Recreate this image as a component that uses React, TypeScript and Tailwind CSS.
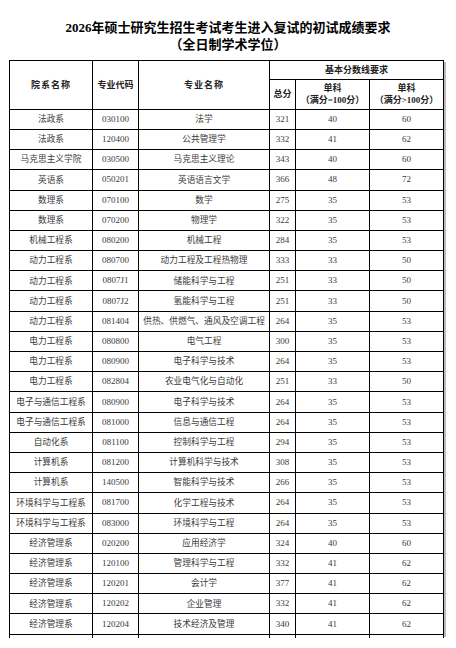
import React from 'react';

interface Row {
  dept: string;
  code: string;
  major: string;
  total: number;
  s100: number;
  sOver: number;
}

const rows: Row[] = [
  { dept: '法政系', code: '030100', major: '法学', total: 321, s100: 40, sOver: 60 },
  { dept: '法政系', code: '120400', major: '公共管理学', total: 332, s100: 41, sOver: 62 },
  { dept: '马克思主义学院', code: '030500', major: '马克思主义理论', total: 343, s100: 40, sOver: 60 },
  { dept: '英语系', code: '050201', major: '英语语言文学', total: 366, s100: 48, sOver: 72 },
  { dept: '数理系', code: '070100', major: '数学', total: 275, s100: 35, sOver: 53 },
  { dept: '数理系', code: '070200', major: '物理学', total: 322, s100: 35, sOver: 53 },
  { dept: '机械工程系', code: '080200', major: '机械工程', total: 284, s100: 35, sOver: 53 },
  { dept: '动力工程系', code: '080700', major: '动力工程及工程热物理', total: 333, s100: 33, sOver: 50 },
  { dept: '动力工程系', code: '0807J1', major: '储能科学与工程', total: 251, s100: 33, sOver: 50 },
  { dept: '动力工程系', code: '0807J2', major: '氢能科学与工程', total: 251, s100: 33, sOver: 50 },
  { dept: '动力工程系', code: '081404', major: '供热、供燃气、通风及空调工程', total: 264, s100: 35, sOver: 53 },
  { dept: '电力工程系', code: '080800', major: '电气工程', total: 300, s100: 35, sOver: 53 },
  { dept: '电力工程系', code: '080900', major: '电子科学与技术', total: 264, s100: 35, sOver: 53 },
  { dept: '电力工程系', code: '082804', major: '农业电气化与自动化', total: 251, s100: 33, sOver: 50 },
  { dept: '电子与通信工程系', code: '080900', major: '电子科学与技术', total: 264, s100: 35, sOver: 53 },
  { dept: '电子与通信工程系', code: '081000', major: '信息与通信工程', total: 264, s100: 35, sOver: 53 },
  { dept: '自动化系', code: '081100', major: '控制科学与工程', total: 294, s100: 35, sOver: 53 },
  { dept: '计算机系', code: '081200', major: '计算机科学与技术', total: 308, s100: 35, sOver: 53 },
  { dept: '计算机系', code: '140500', major: '智能科学与技术', total: 266, s100: 35, sOver: 53 },
  { dept: '环境科学与工程系', code: '081700', major: '化学工程与技术', total: 264, s100: 35, sOver: 53 },
  { dept: '环境科学与工程系', code: '083000', major: '环境科学与工程', total: 264, s100: 35, sOver: 53 },
  { dept: '经济管理系', code: '020200', major: '应用经济学', total: 324, s100: 40, sOver: 60 },
  { dept: '经济管理系', code: '120100', major: '管理科学与工程', total: 332, s100: 41, sOver: 62 },
  { dept: '经济管理系', code: '120201', major: '会计学', total: 377, s100: 41, sOver: 62 },
  { dept: '经济管理系', code: '120202', major: '企业管理', total: 332, s100: 41, sOver: 62 },
  { dept: '经济管理系', code: '120204', major: '技术经济及管理', total: 340, s100: 41, sOver: 62 },
];

const td = 'border border-black text-center align-middle p-0 h-[20.2px] leading-none whitespace-nowrap';
const th = 'border border-black text-center align-middle p-0 font-bold leading-[12px] whitespace-nowrap';

export default function App() {
  return (
    <div className="w-[456px] h-[648px] bg-white overflow-hidden font-['Liberation_Serif','Noto_Sans_CJK_SC',serif] text-[#3a3a3a]">
      <div className="pt-[19px] text-center text-[13px] leading-[17px] font-bold text-black">
        <div>2026年硕士研究生招生考试考生进入复试的初试成绩要求</div>
        <div>（全日制学术学位）</div>
      </div>

      <div className="mt-[7px] ml-[9px] flex">
        <table className="table-fixed border-collapse w-[434px] text-[9px]">
          <colgroup>
            <col className="w-[83px]" />
            <col className="w-[46px]" />
            <col className="w-[131px]" />
            <col className="w-[26px]" />
            <col className="w-[74px]" />
            <col className="w-[74px]" />
          </colgroup>
          <thead className="text-[#222]">
            <tr className="h-[18.5px]">
              <th rowSpan={2} className={`${th} tracking-[1px]`}>院系名称</th>
              <th rowSpan={2} className={th}>专业代码</th>
              <th rowSpan={2} className={`${th} tracking-[1px]`}>专业名称</th>
              <th colSpan={3} className={th}>基本分数线要求</th>
            </tr>
            <tr className="h-[30.3px]">
              <th className={th}>总分</th>
              <th className={th}>
                <div>单科</div>
                <div>（满分=100分）</div>
              </th>
              <th className={th}>
                <div>单科</div>
                <div>（满分&gt;100分）</div>
              </th>
            </tr>
          </thead>
          <tbody>
            {rows.map((r, i) => (
              <tr key={i}>
                <td className={`${td} text-[8.7px]`}>{r.dept}</td>
                <td className={td}>{r.code}</td>
                <td className={`${td} text-[8.7px]`}>{r.major}</td>
                <td className={td}>{r.total}</td>
                <td className={td}>{r.s100}</td>
                <td className={td}>{r.sOver}</td>
              </tr>
            ))}
            <tr className="h-[4px]">
              <td className="border-x border-black p-0" />
              <td className="border-x border-black p-0" />
              <td className="border-x border-black p-0" />
              <td className="border-x border-black p-0" />
              <td className="border-x border-black p-0" />
              <td className="border-x border-black p-0" />
            </tr>
          </tbody>
        </table>
        <div className="w-[2px] mt-[2px] bg-[#bbb] h-[575px]" />
      </div>
    </div>
  );
}
